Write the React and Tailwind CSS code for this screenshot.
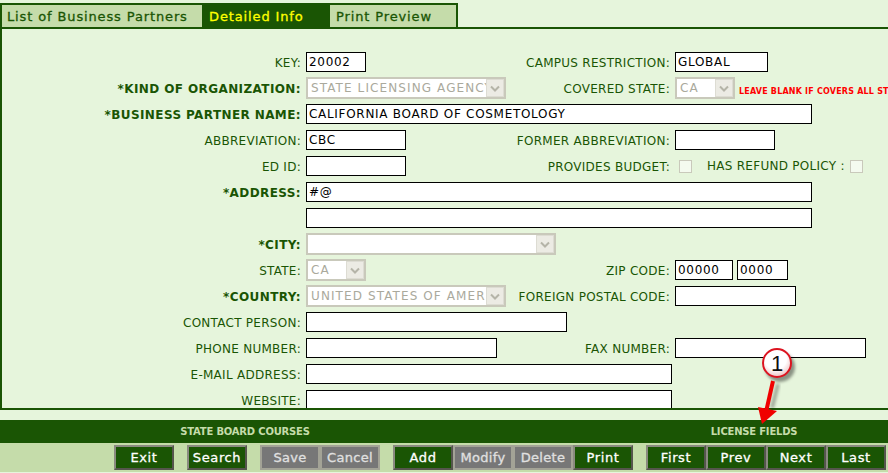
const DARK = "#1a5504";

const Label = ({ children, bold }) => (
  <div
    className={`text-right whitespace-nowrap pr-[5px] pt-[1px] text-[12px] ${
      bold ? "font-bold tracking-[0.4px]" : "tracking-[0.27px]"
    }`}
  >
    {children}
  </div>
);

const Input = ({ w, value }) => (
  <div
    className="h-[20px] bg-white border border-black text-black text-[12px] leading-[19px] pl-[2px] tracking-[0.7px] whitespace-nowrap overflow-hidden"
    style={{ width: w }}
  >
    {value}
  </div>
);

const Select = ({ w, value }) => (
  <div
    className="h-[22px] flex bg-white border-2 border-[#c9c9bb] text-[#aaa99c] text-[12px] leading-[19px] tracking-[1.1px] overflow-hidden"
    style={{ width: w }}
  >
    <div className="flex-1 pl-[3px] whitespace-nowrap overflow-hidden">{value}</div>
    <div className="w-[18px] bg-[#ecebe4] border border-[#dddcd3] flex items-center justify-center">
      <svg width="10" height="7" viewBox="0 0 10 7">
        <path d="M1 1.5 L5 5.5 L9 1.5" fill="none" stroke="#b5b4a8" strokeWidth="2" />
      </svg>
    </div>
  </div>
);

const Check = () => (
  <div className="w-[13px] h-[13px] bg-[#f4faef] border border-[#c9c9bb]" />
);

const Row = ({ children }) => (
  <div className="grid grid-cols-[304px_204px_165px_1fr] items-center h-[26px]">{children}</div>
);

const Btn = ({ children, off, className = "" }) => (
  <button
    className={`w-[60px] h-[25px] border-2 text-[13px] [-webkit-text-stroke:0.3px] ${
      off
        ? "bg-[#777777] text-[#e0e0e0] border-[#a3a396] tracking-[0.3px]"
        : "bg-[#1a5504] text-white tracking-[0.6px] border-t-[#8a8a80] border-l-[#8a8a80] border-r-[#55554d] border-b-[#55554d]"
    } ${className}`}
  >
    {children}
  </button>
);

const Tab = ({ w, pad, active, children }) => (
  <div
    className={`h-[22px] text-[13px] leading-[23px] tracking-[0.87px] [-webkit-text-stroke:0.3px] whitespace-nowrap ${
      active ? "bg-[#1a5504] text-[#ffff00]" : "bg-[#c5dcaa] text-[#1a5504]"
    }`}
    style={{ width: w, paddingLeft: pad }}
  >
    {children}
  </div>
);

export default function App() {
  return (
    <div
      className="relative w-[888px] h-[473px] overflow-hidden bg-[#e6f5dc] flex flex-col text-[#1a5504]"
      style={{ fontFamily: '"DejaVu Sans", Verdana, sans-serif', color: DARK }}
    >
      <div className="pt-[3px] h-[27px] shrink-0">
        <div className="w-[458px] flex border-2 border-b-0 border-[#1a5504]">
          <Tab w={200} pad={5}>List of Business Partners</Tab>
          <Tab w={128} pad={7} active>
            Detailed Info
          </Tab>
          <Tab w={126} pad={6}>Print Preview</Tab>
        </div>
      </div>

      <div className="h-[383px] shrink-0 border-t-2 border-l-2 border-b-2 border-[#1a5504] overflow-hidden pt-[20px]">
        <Row>
          <Label>KEY:</Label>
          <Input w={60} value="20002" />
          <Label>CAMPUS RESTRICTION:</Label>
          <Input w={93} value="GLOBAL" />
        </Row>
        <Row>
          <Label bold>*KIND OF ORGANIZATION:</Label>
          <Select w={200} value="STATE LICENSING AGENCY" />
          <Label>COVERED STATE:</Label>
          <div className="flex items-center gap-[4px]">
            <Select w={60} value="CA" />
            <span className="text-[8px] font-black text-[#ff0000] tracking-[0.2px] whitespace-nowrap mt-[8px]">
              LEAVE BLANK IF COVERS ALL STATES
            </span>
          </div>
        </Row>
        <Row>
          <Label bold>*BUSINESS PARTNER NAME:</Label>
          <div className="col-span-3">
            <Input w={506} value="CALIFORNIA BOARD OF COSMETOLOGY" />
          </div>
        </Row>
        <Row>
          <Label>ABBREVIATION:</Label>
          <Input w={100} value="CBC" />
          <Label>FORMER ABBREVIATION:</Label>
          <Input w={100} />
        </Row>
        <Row>
          <Label>ED ID:</Label>
          <Input w={100} />
          <Label>PROVIDES BUDGET:</Label>
          <div className="flex items-center pl-[4px] text-[12px] tracking-[0.27px]">
            <Check />
            <span className="ml-[15px] mr-[5px] whitespace-nowrap">HAS REFUND POLICY :</span>
            <Check />
          </div>
        </Row>
        <Row>
          <Label bold>*ADDRESS:</Label>
          <div className="col-span-3">
            <Input w={506} value="#@" />
          </div>
        </Row>
        <Row>
          <div />
          <div className="col-span-3">
            <Input w={506} />
          </div>
        </Row>
        <Row>
          <Label bold>*CITY:</Label>
          <div className="col-span-3">
            <Select w={250} />
          </div>
        </Row>
        <Row>
          <Label>STATE:</Label>
          <Select w={60} value="CA" />
          <Label>ZIP CODE:</Label>
          <div className="flex gap-[4px]">
            <Input w={58} value="00000" />
            <Input w={51} value="0000" />
          </div>
        </Row>
        <Row>
          <Label bold>*COUNTRY:</Label>
          <Select w={200} value="UNITED STATES OF AMERICA" />
          <Label>FOREIGN POSTAL CODE:</Label>
          <Input w={121} />
        </Row>
        <Row>
          <Label>CONTACT PERSON:</Label>
          <div className="col-span-3">
            <Input w={261} />
          </div>
        </Row>
        <Row>
          <Label>PHONE NUMBER:</Label>
          <Input w={191} />
          <Label>FAX NUMBER:</Label>
          <Input w={191} />
        </Row>
        <Row>
          <Label>E-MAIL ADDRESS:</Label>
          <div className="col-span-3">
            <Input w={366} />
          </div>
        </Row>
        <Row>
          <Label>WEBSITE:</Label>
          <div className="col-span-3">
            <Input w={366} />
          </div>
        </Row>
      </div>

      <div className="h-[10px] shrink-0" />

      <div className="h-[23px] shrink-0 bg-[#1a5504] text-[#c5dcaa] text-[10px] font-bold leading-[23px] tracking-[-0.2px] flex">
        <div className="w-[490px] shrink-0 text-center">STATE BOARD COURSES</div>
        <div className="w-[268px] shrink-0 ml-[130px] text-center">LICENSE FIELDS</div>
      </div>

      <div className="h-[29px] shrink-0 bg-[#c5dcaa] pt-[2px] pl-[114px] flex">
        <Btn>Exit</Btn>
        <Btn className="ml-[13px]">Search</Btn>
        <Btn off className="ml-[13px]">Save</Btn>
        <Btn off>Cancel</Btn>
        <Btn className="ml-[13px]">Add</Btn>
        <Btn off>Modify</Btn>
        <Btn off>Delete</Btn>
        <Btn>Print</Btn>
        <Btn className="ml-[13px]">First</Btn>
        <Btn>Prev</Btn>
        <Btn>Next</Btn>
        <Btn>Last</Btn>
      </div>

      {/* annotation callout */}
      <svg
        className="absolute left-[740px] top-[340px]"
        width="70"
        height="95"
        viewBox="0 0 70 95"
      >
        <defs>
          <radialGradient id="gloss" cx="0.45" cy="0.35" r="0.7">
            <stop offset="0.55" stopColor="#ffffff" />
            <stop offset="1" stopColor="#e9b8b8" />
          </radialGradient>
          <filter id="soft" x="-50%" y="-50%" width="200%" height="200%">
            <feGaussianBlur stdDeviation="1.6" />
          </filter>
        </defs>
        <path d="M38 44 L32 68" stroke="#000" strokeOpacity="0.3" strokeWidth="4" filter="url(#soft)" />
        <circle cx="40" cy="27" r="15" fill="#000" fillOpacity="0.4" filter="url(#soft)" />
        <path d="M33 41 L26 72" stroke="#f00000" strokeWidth="4" />
        <path d="M18 67 L37 71 L22 84 Z" fill="#f00000" />
        <circle cx="37" cy="23" r="14" fill="url(#gloss)" stroke="#dc1420" strokeWidth="2" />
        <text x="37" y="31" textAnchor="middle" fontSize="22" fill="#111" fontFamily="Liberation Sans, sans-serif">
          1
        </text>
      </svg>
    </div>
  );
}
